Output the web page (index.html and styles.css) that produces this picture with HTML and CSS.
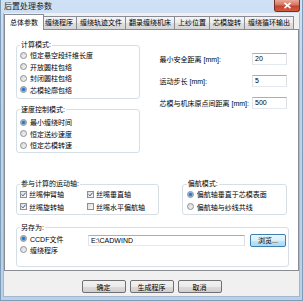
FILE: index.html
```html
<!DOCTYPE html>
<html lang="zh-CN">
<head>
  <meta charset="UTF-8" />
  <title>后置处理参数</title>
  <link rel="stylesheet" href="styles.css">
</head>
<body>
  <div class="window">
    <div class="titlebar">
      <span class="title">后置处理参数</span>
      <span class="close">
        <svg width="9" height="7" viewBox="0 0 9 7"><path d="M1.5 0.8 L7.5 6.2 M7.5 0.8 L1.5 6.2" stroke="#fff" stroke-width="1.6" fill="none"/></svg>
      </span>
    </div>

    <div class="client">
      <div class="tabs">
        <div class="tab active">总体参数</div>
        <div class="tab">缠绕程序</div>
        <div class="tab">缠绕轨迹文件</div>
        <div class="tab">翻录缠绕机床</div>
        <div class="tab">上纱位置</div>
        <div class="tab">芯模旋转</div>
        <div class="tab">缠绕循环输出</div>
      </div>

      <div class="panel">
        <div class="top">
          <div class="left-col">
            <fieldset class="group g-calc">
              <legend>计算模式:</legend>
              <div class="opt"><span class="radio"></span>恒定悬空段纤维长度</div>
              <div class="opt"><span class="radio"></span>开放圆柱包络</div>
              <div class="opt"><span class="radio"></span>封闭圆柱包络</div>
              <div class="opt"><span class="radio on"></span>芯模轮廓包络</div>
            </fieldset>
            <fieldset class="group g-speed">
              <legend>速度控制模式:</legend>
              <div class="opt"><span class="radio on"></span>最小缠绕时间</div>
              <div class="opt"><span class="radio"></span>恒定送纱速度</div>
              <div class="opt"><span class="radio"></span>恒定芯模转速</div>
            </fieldset>
          </div>

          <div class="fields">
            <div class="field"><span>最小安全距离 [mm]:</span><span class="input">20</span></div>
            <div class="field"><span>运动步长 [mm]:</span><span class="input">5</span></div>
            <div class="field"><span>芯模与机床原点间距离 [mm]:</span><span class="input">500</span></div>
          </div>
        </div>

        <div class="middle">
          <fieldset class="group g-axis">
            <legend>参与计算的运动轴:</legend>
            <div class="axis-grid">
              <div class="opt tall"><span class="check on"><svg viewBox="0 0 5 5"><path d="M0.6 2.4 L2 3.9 L4.6 0.7" stroke="#3d5f9e" stroke-width="1" fill="none"/></svg></span>丝嘴伸臂轴</div>
              <div class="opt tall"><span class="check on"><svg viewBox="0 0 5 5"><path d="M0.6 2.4 L2 3.9 L4.6 0.7" stroke="#3d5f9e" stroke-width="1" fill="none"/></svg></span>丝嘴垂直轴</div>
              <div class="opt tall"><span class="check on"><svg viewBox="0 0 5 5"><path d="M0.6 2.4 L2 3.9 L4.6 0.7" stroke="#3d5f9e" stroke-width="1" fill="none"/></svg></span>丝嘴旋转轴</div>
              <div class="opt tall"><span class="check"></span>丝嘴水平偏航轴</div>
            </div>
          </fieldset>
          <fieldset class="group g-yaw">
            <legend>偏航模式:</legend>
            <div class="opt tall"><span class="radio on"></span>偏航轴垂直于芯模表面</div>
            <div class="opt tall"><span class="radio"></span>偏航轴与纱线共线</div>
          </fieldset>
        </div>

        <fieldset class="group g-save">
          <legend>另存为:</legend>
          <div class="save-grid">
            <div class="opt"><span class="radio on"></span>CCDF文件</div>
            <span class="input path">E:\CADWIND</span>
            <span class="btn browse">浏览...</span>
            <div class="opt"><span class="radio"></span>缠绕程序</div>
          </div>
        </fieldset>
      </div>

      <div class="buttons">
        <span class="btn">确定</span>
        <span class="btn">生成程序</span>
        <span class="btn">取消</span>
      </div>
    </div>
  </div>
</body>
</html>
```

FILE: styles.css
```css
* {
  box-sizing: border-box;
}

body {
  margin: 0;
  font-family: "Liberation Sans", "Noto Sans CJK SC", sans-serif;
  font-size: 7px;
  color: #000;
  background: #fff;
}

.window {
  width: 303px;
  height: 301px;
  display: flex;
  flex-direction: column;
  padding: 0 2px 3px;
  background: linear-gradient(#cfe1f5, #bdd4ed 30%, #b8d0ea);
  border: 1px solid #7f9db9;
  border-top: none;
}

.titlebar {
  height: 13px;
  display: flex;
  align-items: flex-start;
}

.title {
  font-size: 8px;
  line-height: 13px;
  margin-left: 1px;
  color: #1a1a1a;
}

.close {
  margin-left: auto;
  width: 26px;
  height: 12px;
  display: flex;
  align-items: center;
  justify-content: center;
  border: 1px solid #7a2d22;
  border-top: none;
  border-radius: 0 0 3px 3px;
  background: linear-gradient(#e9a99b, #d5735f 45%, #c2452f 55%, #d35a3f);
}

.client {
  flex: 1;
  display: flex;
  flex-direction: column;
  background: #f0f0f0;
  border: 1px solid #a3b8cf;
  border-top: none;
}

/* tab strip */
.tabs {
  height: 16px;
  display: flex;
  align-items: flex-end;
  padding-left: 2px;
}

.tab {
  height: 13px;
  line-height: 12px;
  padding: 0 3px;
  border: 1px solid #898c95;
  border-bottom: none;
  margin-right: -1px;
  white-space: nowrap;
  background: linear-gradient(#f4f4f4, #ececec 50%, #e0e0e0 50%, #d6d6d6);
}

.tab.active {
  height: 16px;
  line-height: 15px;
  padding: 0 5px;
  margin: 0 -3px -1px -2px;
  background: #fff;
  position: relative;
  z-index: 1;
}

.panel {
  flex: 1;
  margin: 0 0 0 0;
  padding: 11px 11px 0;
  background: #fff;
  border: 1px solid #898c95;
}

/* group boxes */
.group {
  margin: 0;
  padding: 0 2px 2px 3px;
  border: 1px solid #d5dfe5;
  border-radius: 3px;
  min-width: 0;
}

.group legend {
  padding: 0 1px;
  height: 8px;
  line-height: 8px;
}

.opt {
  display: flex;
  align-items: center;
  height: 11.5px;
  white-space: nowrap;
}

.opt.tall {
  height: 12.5px;
}

.radio {
  width: 7px;
  height: 7px;
  margin-right: 3px;
  border: 1px solid #8d8f91;
  border-radius: 50%;
  background: linear-gradient(135deg, #d6d6d6, #f6f6f6);
  flex: none;
}

.radio.on {
  background: radial-gradient(circle, #2f6bb8 0, #3f82cf 1.4px, #a8c8ea 2.4px, #eef3f8 3px);
}

.check {
  width: 7px;
  height: 7px;
  margin-right: 2px;
  border: 1px solid #8d8f91;
  background: linear-gradient(135deg, #dcdcdc, #fbfbfb);
  flex: none;
  display: flex;
}

.check svg {
  width: 5px;
  height: 5px;
}

.top {
  display: flex;
  align-items: flex-start;
}

.left-col {
  width: 124px;
}

.g-calc {
  padding-top: 0.5px;
}

.g-speed {
  margin-top: 7px;
  padding-top: 3px;
  padding-bottom: 1px;
}

/* numeric fields */
.fields {
  width: 128px;
  margin: 12px 0 0 20px;
  display: flex;
  flex-direction: column;
  gap: 10px;
}

.field {
  height: 12px;
  display: flex;
  align-items: center;
  justify-content: space-between;
  white-space: nowrap;
}

.input {
  width: 35px;
  height: 12px;
  padding-left: 2px;
  line-height: 10px;
  background: #fff;
  border: 1px solid;
  border-color: #abadb3 #dbdfe6 #e3e9ef #e2e3ea;
}

.middle {
  display: flex;
  gap: 23px;
  margin-top: 27px;
}

.g-axis {
  width: 144px;
  padding-bottom: 0.5px;
}

.axis-grid {
  display: grid;
  grid-template-columns: 67px auto;
}

.g-yaw {
  width: 106px;
  padding-left: 4px;
  padding-bottom: 0.5px;
}

.g-save {
  width: 273px;
  margin-top: 9px;
  padding-top: 1.5px;
  padding-bottom: 11px;
}

.save-grid {
  display: grid;
  grid-template-columns: 63px 157px 36px;
  grid-template-rows: 11px 10.5px;
  column-gap: 5px;
}

.input.path {
  width: auto;
  height: 11.5px;
  margin-top: 1.5px;
}

/* buttons */
.btn {
  width: 44px;
  height: 13px;
  display: flex;
  align-items: center;
  justify-content: center;
  border: 1px solid #707070;
  border-radius: 2px;
  background: linear-gradient(#f2f2f2, #ebebeb 50%, #dddddd 50%, #cfcfcf);
  white-space: nowrap;
}

.btn.browse {
  width: auto;
  margin-top: 0.5px;
  border-color: #3c7fb1;
  background: linear-gradient(#eaf6fd, #d9f0fc 50%, #bee6fd 50%, #a7d9f5);
}

.buttons {
  display: flex;
  justify-content: center;
  gap: 4px;
  margin: 9px 0 3px;
}
```
